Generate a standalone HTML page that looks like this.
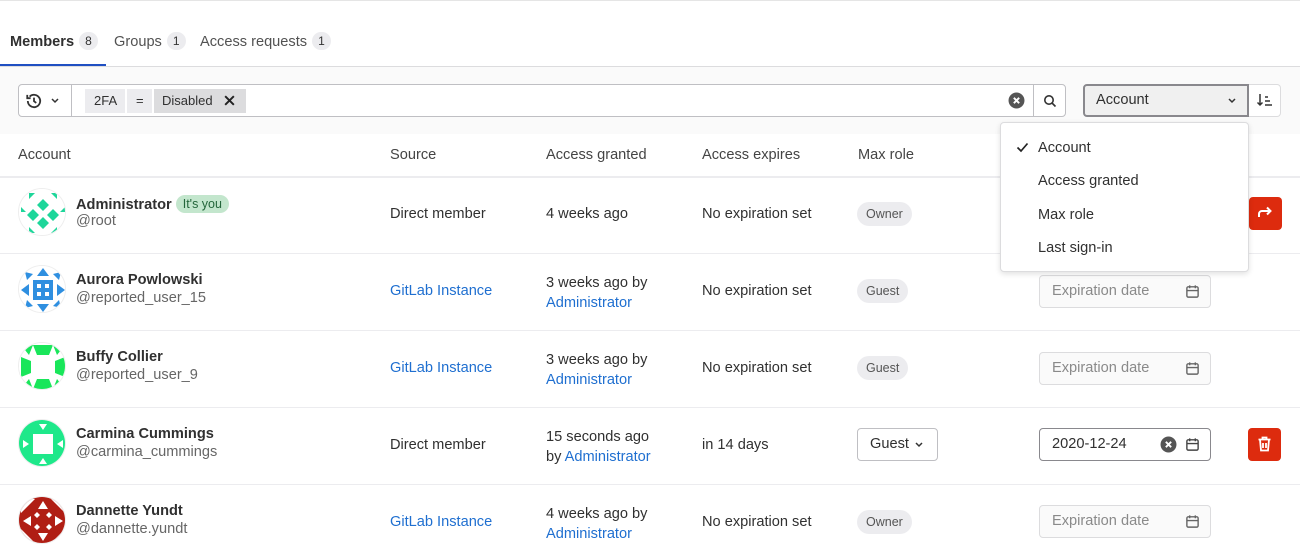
<!DOCTYPE html>
<html><head><meta charset="utf-8"><style>
*{box-sizing:border-box;margin:0;padding:0}
body{width:1300px;height:560px;overflow:hidden;background:#fff;font-family:"Liberation Sans",sans-serif;color:#303030;font-size:14.6px;position:relative}
.a{position:absolute}
.badge{display:inline-block;background:#ececef;border-radius:10px;font-size:12px;padding:2px 6px;color:#333;margin-left:5px;vertical-align:1px}
.tab{top:32px;font-size:14.6px;color:#525252}
.hdr{top:147px;font-size:14.6px;color:#444}
.sep{left:0;width:1300px;height:1px;background:#ececef}
.name{font-weight:bold;color:#303030;font-size:14.6px}
.user{color:#666;font-size:14.6px}
.link{color:#1f6fd0}
.pill{background:#ececef;border-radius:12px;font-size:12.5px;padding:5px 9px;color:#555}
.date{width:172px;height:33px;border:1px solid #dcdcde;border-radius:4px;background:#fafafa;color:#8a8a8a;padding:7px 12px;font-size:14.6px}
.cal{position:absolute;right:10px;top:8px}
.av{left:18px;width:48px;height:48px;border-radius:50%;overflow:hidden;border:1px solid #eee}
</style></head><body>
<div class="a" style="left:0;top:0;width:1300px;height:1px;background:#e5e5e5"></div>
<div class="a tab" style="left:10px;color:#303030;font-weight:bold">Members<span class="badge" style="font-weight:normal">8</span></div>
<div class="a tab" style="left:114px">Groups<span class="badge">1</span></div>
<div class="a tab" style="left:200px">Access requests<span class="badge">1</span></div>
<div class="a" style="left:0;top:66px;width:1300px;height:1px;background:#dcdcde"></div>
<div class="a" style="left:0;top:64px;width:106px;height:2px;background:#1f4fc2"></div>
<div class="a" style="left:0;top:67px;width:1300px;height:67px;background:#fafafa"></div>
<div class="a" style="left:18px;top:84px;width:1048px;height:33px;border:1px solid #bfbfc3;border-radius:4px;background:#fff"></div>
<div class="a" style="left:71px;top:85px;width:1px;height:31px;background:#bfbfc3"></div>
<svg class="a" style="left:25px;top:92px" width="18" height="18" viewBox="0 0 16 16" fill="none" stroke="#333" stroke-width="1.6"><path d="M2.5 8a5.5 5.5 0 1 0 1.6-3.9"/><path d="M2 2.5v3h3"/><path d="M8 5v3.2l2 1.5"/></svg>
<svg class="a" style="left:50px;top:97px" width="10" height="8" viewBox="0 0 10 8" fill="none" stroke="#333" stroke-width="1.5"><path d="M2 2l3 3 3-3"/></svg>
<div class="a" style="left:85px;top:89px;width:40px;height:24px;background:#ececef;font-size:13px;padding:4px 9px">2FA</div>
<div class="a" style="left:127px;top:89px;width:25px;height:24px;background:#ececef;font-size:13px;padding:4px 9px">=</div>
<div class="a" style="left:154px;top:89px;width:92px;height:24px;background:#dcdcde;font-size:13px;padding:4px 8px">Disabled</div>
<svg class="a" style="left:223px;top:94px" width="13" height="13" viewBox="0 0 12 12" stroke="#222" stroke-width="1.8"><path d="M2 2l8 8M10 2l-8 8"/></svg>
<svg class="a" style="left:1008px;top:92px" width="17" height="17" viewBox="0 0 16 16"><circle cx="8" cy="8" r="7.5" fill="#555"/><path d="M5.5 5.5l5 5M10.5 5.5l-5 5" stroke="#fff" stroke-width="1.8"/></svg>
<div class="a" style="left:1033px;top:85px;width:1px;height:31px;background:#bfbfc3"></div>
<svg class="a" style="left:1043px;top:94px" width="14" height="14" viewBox="0 0 14 14" fill="none" stroke="#333" stroke-width="1.6"><circle cx="6" cy="6" r="4.2"/><path d="M9 9l3.5 3.5"/></svg>
<div class="a" style="left:1083px;top:84px;width:166px;height:33px;border:2px solid #89888d;border-radius:4px 0 0 4px;background:#f0f0f0;padding:6px 11px;font-size:14.6px">Account</div>
<svg class="a" style="left:1227px;top:97px" width="10" height="8" viewBox="0 0 10 8" fill="none" stroke="#333" stroke-width="1.5"><path d="M2 2l3 3 3-3"/></svg>
<div class="a" style="left:1249px;top:84px;width:32px;height:33px;border:1px solid #dcdcde;border-left:none;border-radius:0 4px 4px 0;background:#fff"></div>
<svg class="a" style="left:1256px;top:92px" width="18" height="16" viewBox="0 0 18 16" fill="none" stroke="#333" stroke-width="1.5"><path d="M4 2v11M1.5 10.5L4 13l2.5-2.5M9 5h3M9 9h5M9 13h7"/></svg>

<div class="a hdr" style="left:18px">Account</div>
<div class="a hdr" style="left:390px">Source</div>
<div class="a hdr" style="left:546px">Access granted</div>
<div class="a hdr" style="left:702px">Access expires</div>
<div class="a hdr" style="left:858px">Max role</div>
<div class="a sep" style="top:176px;height:2px"></div>
<div class="a sep" style="top:253px"></div>
<div class="a sep" style="top:330px"></div>
<div class="a sep" style="top:407px"></div>
<div class="a sep" style="top:484px"></div>

<!-- row1 -->
<div class="a av" style="top:188px"><svg width="48" height="48" viewBox="0 0 48 48"><rect width="48" height="48" fill="#fff"/><g fill="#1ed69a"><path d="M24 10l6 6-6 6-6-6zM14 20l6 6-6 6-6-6zM34 20l6 6-6 6-6-6zM24 28l6 6-6 6-6-6z"/><path d="M10 4l6 0-6 6zM38 4l-6 0 6 6zM10 44l6 0-6-6zM38 44l-6 0 6-6zM2 18l5 5-5 0zM46 18l-5 5 5 0z"/></g></svg></div>
<div class="a name" style="left:76px;top:195px">Administrator <span style="display:inline-block;background:#c3e6cd;color:#24663b;font-weight:normal;font-size:12.5px;border-radius:10px;padding:2px 7px;vertical-align:1px">It's you</span></div>
<div class="a user" style="left:76px;top:213px">@root</div>
<div class="a" style="left:390px;top:206px">Direct member</div>
<div class="a" style="left:546px;top:206px">4 weeks ago</div>
<div class="a" style="left:702px;top:206px">No expiration set</div>
<div class="a pill" style="left:857px;top:202px">Owner</div>
<div class="a" style="left:1249px;top:197px;width:33px;height:33px;background:#dd2b0e;border-radius:4px"></div>
<svg class="a" style="left:1257px;top:206px" width="16" height="14" viewBox="0 0 16 14" fill="none" stroke="#fff" stroke-width="2"><path d="M2 11V8a3 3 0 0 1 3-3h9M10 1.5L13.5 5 10 8.5"/></svg>

<!-- row2 -->
<div class="a av" style="top:265px"><svg width="48" height="48" viewBox="0 0 48 48"><rect width="48" height="48" fill="#fff"/><g fill="#2f8fe0"><rect x="14" y="14" width="20" height="20"/><path d="M24 2l6 8h-12zM24 46l6-8h-12zM2 24l8 6v-12zM46 24l-8 6v-12zM6 6l8 2-6 6zM42 6l-8 2 6 6zM6 42l8-2-6-6zM42 42l-8-2 6-6z"/></g><g fill="#fff"><rect x="18" y="18" width="4" height="4"/><rect x="26" y="18" width="4" height="4"/><rect x="18" y="26" width="4" height="4"/><rect x="26" y="26" width="4" height="4"/></g></svg></div>
<div class="a name" style="left:76px;top:272px">Aurora Powlowski</div>
<div class="a user" style="left:76px;top:290px">@reported_user_15</div>
<div class="a link" style="left:390px;top:283px">GitLab Instance</div>
<div class="a" style="left:546px;top:273px;line-height:20px">3 weeks ago by<br><span class="link">Administrator</span></div>
<div class="a" style="left:702px;top:283px">No expiration set</div>
<div class="a pill" style="left:857px;top:279px">Guest</div>
<div class="a date" style="left:1039px;top:275px">Expiration date<svg class="cal" width="15" height="15" viewBox="0 0 16 16" fill="none" stroke="#666" stroke-width="1.5"><rect x="2" y="3" width="12" height="11" rx="1.5"/><path d="M2 7h12M5 1.5v3M11 1.5v3"/></svg></div>

<!-- row3 -->
<div class="a av" style="top:342px"><svg width="48" height="48" viewBox="0 0 48 48"><rect width="48" height="48" fill="#fff"/><g fill="#19e65a"><path d="M14 2h20l-4 10h-12zM14 46h20l-4-10h-12zM2 14v20l10-4v-12zM46 14v20l-10-4v-12zM2 2h12l-4 10zM46 2h-12l4 10zM2 46h12l-4-10zM46 46h-12l4-10z"/></g></svg></div>
<div class="a name" style="left:76px;top:349px">Buffy Collier</div>
<div class="a user" style="left:76px;top:367px">@reported_user_9</div>
<div class="a link" style="left:390px;top:360px">GitLab Instance</div>
<div class="a" style="left:546px;top:350px;line-height:20px">3 weeks ago by<br><span class="link">Administrator</span></div>
<div class="a" style="left:702px;top:360px">No expiration set</div>
<div class="a pill" style="left:857px;top:356px">Guest</div>
<div class="a date" style="left:1039px;top:352px">Expiration date<svg class="cal" width="15" height="15" viewBox="0 0 16 16" fill="none" stroke="#666" stroke-width="1.5"><rect x="2" y="3" width="12" height="11" rx="1.5"/><path d="M2 7h12M5 1.5v3M11 1.5v3"/></svg></div>

<!-- row4 -->
<div class="a av" style="top:419px"><svg width="48" height="48" viewBox="0 0 48 48"><rect width="48" height="48" fill="#1ee88a"/><rect x="14" y="14" width="20" height="20" fill="#fff"/><g fill="#fff"><path d="M2 2h8l-8 8zM46 2h-8l8 8zM2 46h8l-8-8zM46 46h-8l8-8zM20 4l4 6 4-6zM20 44l4-6 4 6zM4 20l6 4-6 4zM44 20l-6 4 6 4z"/></g></svg></div>
<div class="a name" style="left:76px;top:426px">Carmina Cummings</div>
<div class="a user" style="left:76px;top:444px">@carmina_cummings</div>
<div class="a" style="left:390px;top:437px">Direct member</div>
<div class="a" style="left:546px;top:427px;line-height:20px">15 seconds ago<br>by <span class="link">Administrator</span></div>
<div class="a" style="left:702px;top:437px">in 14 days</div>
<div class="a" style="left:857px;top:428px;width:81px;height:33px;border:1px solid #bfbfc3;border-radius:4px;padding:7px 12px">Guest</div>
<svg class="a" style="left:914px;top:441px" width="10" height="8" viewBox="0 0 10 8" fill="none" stroke="#333" stroke-width="1.5"><path d="M2 2l3 3 3-3"/></svg>
<div class="a date" style="left:1039px;top:428px;background:#fff;border-color:#89888d;color:#303030">2020-12-24<svg class="cal" width="15" height="15" viewBox="0 0 16 16" fill="none" stroke="#444" stroke-width="1.5"><rect x="2" y="3" width="12" height="11" rx="1.5"/><path d="M2 7h12M5 1.5v3M11 1.5v3"/></svg></div>
<svg class="a" style="left:1160px;top:436px" width="17" height="17" viewBox="0 0 16 16"><circle cx="8" cy="8" r="7.5" fill="#555"/><path d="M5.5 5.5l5 5M10.5 5.5l-5 5" stroke="#fff" stroke-width="1.8"/></svg>
<div class="a" style="left:1248px;top:428px;width:33px;height:33px;background:#dd2b0e;border-radius:4px"></div>
<svg class="a" style="left:1257px;top:436px" width="15" height="16" viewBox="0 0 15 16" fill="none" stroke="#fff" stroke-width="1.8"><path d="M1.5 3.5h12M5.5 3.5V1.5h4v2M3 3.5l1 11h7l1-11M6 7v5M9 7v5"/></svg>

<!-- row5 -->
<div class="a av" style="top:496px"><svg width="48" height="48" viewBox="0 0 48 48"><rect width="48" height="48" fill="#b01e14"/><g fill="#fff"><path d="M2 2h14l-14 14zM46 2h-14l14 14zM2 46h14l-14-14zM46 46h-14l14-14zM24 4l-5 8h10zM24 44l-5-8h10zM4 24l8-5v10zM44 24l-8-5v10z"/><path d="M18 15l3 3-3 3-3-3zM30 15l3 3-3 3-3-3zM18 27l3 3-3 3-3-3zM30 27l3 3-3 3-3-3z"/></g></svg></div>
<div class="a name" style="left:76px;top:503px">Dannette Yundt</div>
<div class="a user" style="left:76px;top:521px">@dannette.yundt</div>
<div class="a link" style="left:390px;top:514px">GitLab Instance</div>
<div class="a" style="left:546px;top:504px;line-height:20px">4 weeks ago by<br><span class="link">Administrator</span></div>
<div class="a" style="left:702px;top:514px">No expiration set</div>
<div class="a pill" style="left:857px;top:510px">Owner</div>
<div class="a date" style="left:1039px;top:505px">Expiration date<svg class="cal" width="15" height="15" viewBox="0 0 16 16" fill="none" stroke="#666" stroke-width="1.5"><rect x="2" y="3" width="12" height="11" rx="1.5"/><path d="M2 7h12M5 1.5v3M11 1.5v3"/></svg></div>

<!-- dropdown -->
<div class="a" style="left:1000px;top:122px;width:249px;height:150px;background:#fff;border:1px solid #dcdcde;border-radius:4px;box-shadow:0 2px 6px rgba(0,0,0,.12)">
<svg class="a" style="left:15px;top:19px" width="13" height="11" viewBox="0 0 13 11" fill="none" stroke="#222" stroke-width="1.7"><path d="M1.5 5.5l3.5 3.5 6.5-7.5"/></svg>
<div class="a" style="left:37px;top:17px">Account</div>
<div class="a" style="left:37px;top:50px">Access granted</div>
<div class="a" style="left:37px;top:84px">Max role</div>
<div class="a" style="left:37px;top:117px">Last sign-in</div>
</div>
</body></html>
